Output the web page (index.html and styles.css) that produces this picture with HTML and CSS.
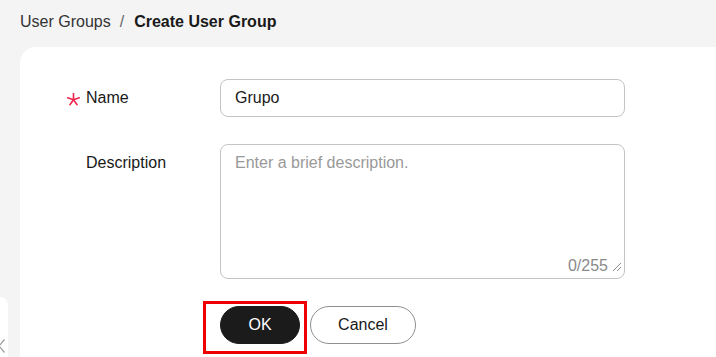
FILE: index.html
```html
<!DOCTYPE html>
<html lang="en">
<head>
<meta charset="utf-8">
<title>Create User Group</title>
<link rel="stylesheet" href="styles.css">
</head>
<body>
<div class="page">
  <aside class="side">
    <div class="side-panel">
      <svg class="side-chevron" width="8" height="16" viewBox="0 0 8 16"><path d="M4.5 1.5 L-1 8 L4.5 14.5" fill="none" stroke="#9a9a9a" stroke-width="1.2"/></svg>
    </div>
  </aside>
  <main class="main">
    <nav class="crumbs">
      <span class="crumb">User Groups</span>
      <span class="sep">/</span>
      <span class="crumb current">Create User Group</span>
    </nav>
    <section class="card">
      <div class="row">
        <div class="label">
          <span class="req"><svg width="13" height="13" viewBox="0 0 12 12"><g stroke="#f0284e" stroke-width="1.5" stroke-linecap="round"><path d="M6 6.2 L6 0.6"/><path d="M6 6.2 L11.3 4.4"/><path d="M6 6.2 L9.3 10.8"/><path d="M6 6.2 L2.7 10.8"/><path d="M6 6.2 L0.7 4.4"/></g></svg></span>
          <span class="label-text">Name</span>
        </div>
        <div class="field input">Grupo</div>
      </div>
      <div class="row">
        <div class="label">
          <span class="req"></span>
          <span class="label-text">Description</span>
        </div>
        <div class="field textarea">
          <span class="placeholder">Enter a brief description.</span>
          <div class="ta-foot">
            <span class="count">0/255</span>
            <svg class="grip" width="10" height="10" viewBox="0 0 10 10"><g stroke="#8c8c8c" stroke-width="1"><path d="M1 9 L9 1"/><path d="M5 9 L9 5"/></g></svg>
          </div>
        </div>
      </div>
      <div class="actions">
        <div class="ok-wrap">
          <button class="btn btn-primary">OK</button>
          <span class="highlight"></span>
        </div>
        <button class="btn btn-default">Cancel</button>
      </div>
    </section>
  </main>
</div>
</body>
</html>
```

FILE: styles.css
```css
* { box-sizing: border-box; }
html, body { margin: 0; padding: 0; height: 100%; }
body {
  background: #f4f4f4;
  font-family: "Liberation Sans", Arial, sans-serif;
  font-size: 16px;
  color: #191919;
  overflow: hidden;
}
.page {
  display: flex;
  height: 357px;
}
.side {
  width: 20px;
  flex: none;
  display: flex;
  flex-direction: column;
  justify-content: flex-end;
}
.side-panel {
  width: 8px;
  height: 60px;
  background: #fff;
  border-top-right-radius: 8px;
  padding-top: 41px;
  overflow: hidden;
}
.side-chevron { display: block; }
.main {
  flex: 1;
  display: flex;
  flex-direction: column;
  min-width: 0;
}
.crumbs {
  height: 47px;
  display: flex;
  align-items: center;
  padding-bottom: 4px;
  white-space: nowrap;
}
.crumb { color: #333; }
.sep { color: #666; margin: 0 10px 0 9px; }
.crumb.current { font-weight: bold; color: #191919; }
.card {
  flex: 1;
  background: #fff;
  border-top-left-radius: 16px;
  padding: 32px 0 0 48px;
}
.row {
  display: flex;
  align-items: flex-start;
  margin-bottom: 27px;
}
.label {
  width: 152px;
  flex: none;
  display: flex;
  align-items: center;
  height: 38px;
}
.req {
  width: 18px;
  flex: none;
  display: flex;
  align-items: center;
  padding-top: 2px;
}
.req svg { display: block; margin-left: -1px; }
.label-text { color: #191919; }
.field {
  width: 405px;
  border: 1px solid #c4c4c4;
  border-radius: 8px;
  padding: 0 14px;
}
.input {
  height: 38px;
  line-height: 36px;
  color: #191919;
}
.textarea {
  height: 135px;
  display: flex;
  flex-direction: column;
  padding-top: 6px;
  padding-bottom: 3px;
}
.placeholder { color: #999; line-height: 24px; }
.ta-foot {
  margin-top: auto;
  display: flex;
  align-items: flex-end;
  justify-content: flex-end;
  margin-right: -12px;
}
.count { color: #8a8a8a; line-height: 18px; margin-right: 4px; }
.grip { display: block; margin-bottom: 3px; }
.actions {
  display: flex;
  gap: 10px;
  padding-left: 152px;
}
.ok-wrap { position: relative; }
.btn {
  height: 38px;
  border-radius: 19px;
  font-family: "Liberation Sans", Arial, sans-serif;
  font-size: 16px;
  cursor: pointer;
  padding: 0;
}
.btn-primary {
  width: 80px;
  background: #1b1b1b;
  border: 1px solid #1b1b1b;
  color: #fff;
}
.btn-default {
  width: 106px;
  background: #fff;
  border: 1px solid #8f8f8f;
  color: #191919;
}
.highlight {
  position: absolute;
  left: -17px;
  top: -5px;
  width: 104px;
  height: 53px;
  border: 3px solid #ee0000;
  pointer-events: none;
}
```
